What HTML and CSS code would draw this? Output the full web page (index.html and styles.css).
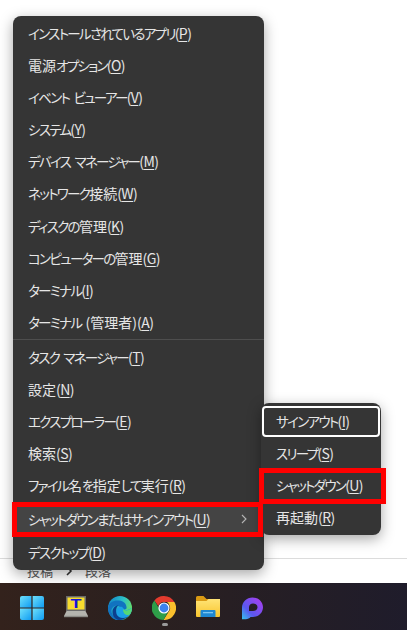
FILE: index.html
```html
<!DOCTYPE html>
<html lang="ja">
<head>
    <meta charset="UTF-8">
    <meta name="viewport" content="width=device-width, initial-scale=1.0">
    <title>Quick Link Menu</title>
    <link rel="stylesheet" href="styles.css">
</head>
<body>
    <div class="page">
        <div class="crumbs">
            <span>投稿</span>
            <svg class="crumb-sep" width="8" height="10" viewBox="0 0 8 10"><path d="M2 1l4 4-4 4" fill="none" stroke="#333" stroke-width="1.6"/></svg>
            <span>段落</span>
        </div>
    </div>

    <div class="menu">
        <div class="group">
            <div class="item">インストールされているアプリ<span class="key">(<u>P</u>)</span></div>
            <div class="item"><span class="kj">電源</span>オプション<span class="key">(<u>O</u>)</span></div>
            <div class="item">イベント ビューアー<span class="key">(<u>V</u>)</span></div>
            <div class="item">システム<span class="key">(<u>Y</u>)</span></div>
            <div class="item">デバイス マネージャー<span class="key">(<u>M</u>)</span></div>
            <div class="item">ネットワーク<span class="kj">接続</span><span class="key">(<u>W</u>)</span></div>
            <div class="item">ディスクの<span class="kj">管理</span><span class="key">(<u>K</u>)</span></div>
            <div class="item">コンピューターの<span class="kj">管理</span><span class="key">(<u>G</u>)</span></div>
            <div class="item">ターミナル<span class="key">(<u>I</u>)</span></div>
            <div class="item">ターミナル <span class="kj">(管理者)</span><span class="key">(<u>A</u>)</span></div>
        </div>
        <div class="divider"></div>
        <div class="group group-tools">
            <div class="item">タスク マネージャー<span class="key">(<u>T</u>)</span></div>
            <div class="item"><span class="kj">設定</span><span class="key">(<u>N</u>)</span></div>
            <div class="item">エクスプローラー<span class="key">(<u>E</u>)</span></div>
            <div class="item"><span class="kj">検索</span><span class="key">(<u>S</u>)</span></div>
            <div class="item">ファイル<span class="kj">名</span>を<span class="kj">指定</span>して<span class="kj">実行</span><span class="key">(<u>R</u>)</span></div>
        </div>
        <div class="group group-last">
            <div class="item item-open marked">
                <span>シャットダウンまたはサインアウト<span class="key">(<u>U</u>)</span></span>
                <svg width="8" height="10" viewBox="0 0 8 10"><path d="M2 1l4 4-4 4" fill="none" stroke="#b5b5b5" stroke-width="1.1"/></svg>
            </div>
            <div class="item">デスクトップ<span class="key">(<u>D</u>)</span></div>
        </div>
    </div>

    <div class="submenu">
        <div class="item item-focus">サインアウト<span class="key">(<u>I</u>)</span></div>
        <div class="item">スリープ<span class="key">(<u>S</u>)</span></div>
        <div class="item marked-sub">シャットダウン<span class="key">(<u>U</u>)</span></div>
        <div class="item"><span class="kj">再起動</span><span class="key">(<u>R</u>)</span></div>
    </div>

    <div class="taskbar">
        <div class="task">
            <svg width="24" height="24" viewBox="0 0 24 24">
                <defs>
                    <linearGradient id="winGrad" x1="0" y1="0" x2="1" y2="1">
                        <stop offset="0" stop-color="#6fe0fb"/>
                        <stop offset="1" stop-color="#0f9cf3"/>
                    </linearGradient>
                </defs>
                <path d="M2 0h9.400v11.400H0V2a2 2 0 0 1 2-2z" fill="url(#winGrad)"/>
                <path d="M12.600 0H22a2 2 0 0 1 2 2v9.400H12.600z" fill="url(#winGrad)"/>
                <path d="M0 12.600h11.400V24H2a2 2 0 0 1-2-2z" fill="url(#winGrad)"/>
                <path d="M12.600 12.600H24V22a2 2 0 0 1-2 2h-9.400z" fill="url(#winGrad)"/>
            </svg>
        </div>
        <div class="task">
            <svg width="24" height="24" viewBox="0 0 24 24">
                <rect x="2" y="0" width="20" height="15" fill="#6b6b6b"/>
                <rect x="3.500" y="1.500" width="17" height="12" fill="#f7dc2e"/>
                <text x="6.500" y="12" textLength="11" lengthAdjust="spacingAndGlyphs" class="term-t">T</text>
                <path d="M2.500 15h19l2.500 5H0z" fill="#b4b4ae"/>
                <rect x="0" y="19.800" width="24" height="1.400" fill="#8b8b86"/>
            </svg>
        </div>
        <div class="task">
            <svg width="24" height="24" viewBox="0 0 24 24">
                <defs>
                    <linearGradient id="edgeTop" x1="0" y1="0" x2="1" y2="0.4">
                        <stop offset="0" stop-color="#0f7fc9"/>
                        <stop offset="0.6" stop-color="#2cc0c8"/>
                        <stop offset="1" stop-color="#62dd6e"/>
                    </linearGradient>
                </defs>
                <circle cx="12" cy="12" r="12" fill="url(#edgeTop)"/>
                <path d="M0 12C1 6 6 4 11 4.600c5 .6 8 3.800 7.500 7.900-2 2-6 1.500-6 0 0-2-3-3.500-5.500-2.500C3 11.500 2.500 15 4.500 18.500 7 22.500 12 24 16 23.300 8 27 0 21 0 12z" fill="#1173c0"/>
                <path d="M4.500 16C4.500 11.500 8 9 10.500 9.500 8.500 10.500 7.800 13 8.500 15.500 10 20.500 16.500 22.500 21 19.500 18 23 14 24 11 24 7 23.500 4.500 20 4.500 16z" fill="#0b3f8f"/>
                <path d="M8.500 14c1-4 6-4 7-1.500.5 1.500 3 2 5 1 2-1 3.500-1.500 3.500-2 0 4-2 8-5 9.500-4 2-9 .8-10.500-3-.4-1.500-.4-2.800 0-4z" fill="#1ba1e6"/>
                <path d="M15 13c2 2.500 6 1.500 9-1.500 0 3-1 5.500-3 7.500-3 .5-6-1-6-6z" fill="#55d976"/>
            </svg>
        </div>
        <div class="task task-running">
            <svg width="24" height="24" viewBox="0 0 24 24">
                <path d="M12 0a12 12 0 0 1 10.400 6H12a6 6 0 0 0-5.700 4.100L2.400 4.500A12 12 0 0 1 12 0z" fill="#e33b2e"/>
                <path d="M22.400 6A12 12 0 0 1 11.500 24l4.800-7.800A6 6 0 0 0 17.200 9 6 6 0 0 0 15 6z" fill="#fbc02d"/>
                <path d="M2.400 4.500l4.700 8a6 6 0 0 0 8.900 3.200L11.500 24A12 12 0 0 1 2.400 4.500z" fill="#2e9e49"/>
                <circle cx="12" cy="12" r="5.600" fill="#fff"/>
                <circle cx="12" cy="12" r="4.400" fill="#3b82ee"/>
            </svg>
            <span class="run-dot"></span>
        </div>
        <div class="task">
            <svg width="24" height="24" viewBox="0 0 24 24">
                <defs>
                    <linearGradient id="folderGrad" x1="0" y1="0" x2="0" y2="1">
                        <stop offset="0" stop-color="#ffe476"/>
                        <stop offset="1" stop-color="#f8c52e"/>
                    </linearGradient>
                </defs>
                <path d="M0 1.500A1.500 1.500 0 0 1 1.500 0h6l3 3H24v4H0z" fill="#d99a14"/>
                <path d="M0 5h10.500l2-2H24v17a1 1 0 0 1-1 1H1a1 1 0 0 1-1-1z" fill="url(#folderGrad)"/>
                <path d="M4.500 15a1 1 0 0 1 1-1h13a1 1 0 0 1 1 1v6h-15z" fill="#1e87d2"/>
                <rect x="7" y="16" width="10" height="1.300" fill="#7cc6f2"/>
            </svg>
        </div>
        <div class="task">
            <svg width="24" height="24" viewBox="0 0 24 24">
                <defs>
                    <linearGradient id="loopGrad" x1="0" y1="1" x2="1" y2="0">
                        <stop offset="0" stop-color="#35c4ee"/>
                        <stop offset="0.35" stop-color="#5a58ee"/>
                        <stop offset="1" stop-color="#b13cf0"/>
                    </linearGradient>
                </defs>
                <path fill-rule="evenodd" d="M2 12C2 5.900 6.700 1.500 12.500 1.500S23 5.900 23 11.300c0 5.400-4.500 9.700-10 9.700h-2.500c-1 1.400-2.700 2.200-4.700 2.200H2zM13 7.500c-2.200 0-4 1.700-4 3.700v3.800h4c2.500 0 4.500-1.600 4.500-3.800S15.500 7.500 13 7.500z" fill="url(#loopGrad)"/>
            </svg>
        </div>
    </div>
</body>
</html>
```

FILE: styles.css
```css
html, body {
    height: 100%;
}

body {
    margin: 0;
    background: #fff;
    font-family: "Noto Sans CJK JP", "Noto Sans", sans-serif;
    display: flex;
    flex-direction: column;
    height: 630px;
    overflow: hidden;
}

.page {
    flex: 1;
    display: flex;
    flex-direction: column;
    justify-content: flex-end;
}

.crumbs {
    box-sizing: border-box;
    height: 25px;
    border-top: 1px solid #dcdcdc;
    padding: 5px 0 0 27px;
    display: flex;
    align-items: flex-start;
    gap: 12px;
    font-size: 13px;
    line-height: 14px;
    color: #555;
}

.crumb-sep {
    margin-top: 2px;
}

.taskbar {
    height: 47px;
    padding-left: 10px;
    display: flex;
    background: linear-gradient(90deg, #33221c 0%, #2a2020 40%, #1f1c2b 100%);
}

.task {
    width: 44px;
    display: flex;
    justify-content: center;
    padding-top: 13px;
    position: relative;
}

.run-dot {
    position: absolute;
    left: 20px;
    bottom: 4px;
    width: 6px;
    height: 3px;
    border-radius: 2px;
    background: #9a9a9a;
}

.term-t {
    font-family: "Liberation Sans", sans-serif;
    font-size: 12px;
    font-weight: 700;
    fill: #1414d8;
}

.menu,
.submenu {
    position: absolute;
    background: #353535;
    border-radius: 8px;
    box-sizing: border-box;
    box-shadow: 0 4px 14px rgba(0, 0, 0, 0.35);
    color: #e6e6e6;
    font-size: 13.5px;
    font-feature-settings: "palt";
    letter-spacing: -1.7px;
    word-spacing: 3px;
}

.menu {
    left: 13px;
    top: 16px;
    width: 251px;
    height: 554px;
    padding-top: 1px;
}

.submenu {
    left: 261px;
    top: 403px;
    width: 120px;
    height: 132px;
    padding-top: 2px;
    z-index: 2;
}

.item {
    height: 32.1px;
    line-height: 32.1px;
    padding-left: 15px;
    white-space: pre;
    position: relative;
}

/* kanji keep their full width, only the kana are squeezed */
.kj {
    font-size: 14px;
    letter-spacing: 0;
}

.key {
    font-size: 14px;
    letter-spacing: -0.6px;
}

.item u {
    text-underline-offset: 2px;
    text-decoration-thickness: 1px;
}

.divider {
    height: 1px;
    margin: 1px 0 1px;
    background: #4e4e4e;
}

.group-last {
    margin-top: 2px;
}

.item-open {
    display: flex;
    align-items: center;
    justify-content: space-between;
    padding-right: 16px;
    background: #444;
}

.marked::after,
.marked-sub::after {
    content: "";
    position: absolute;
    border: 5px solid #f00;
    z-index: 3;
}

.marked::after {
    left: -1px;
    right: 1px;
    top: -1px;
    bottom: -1px;
}

.marked-sub::after {
    left: -2px;
    right: -5px;
    top: -1px;
    bottom: -3px;
}

.item-focus {
    box-sizing: border-box;
    height: 31px;
    line-height: 26px;
    margin: 1px 1px 0;
    padding-left: 12px;
    border: 2px solid #fff;
    border-radius: 4px;
}
```
